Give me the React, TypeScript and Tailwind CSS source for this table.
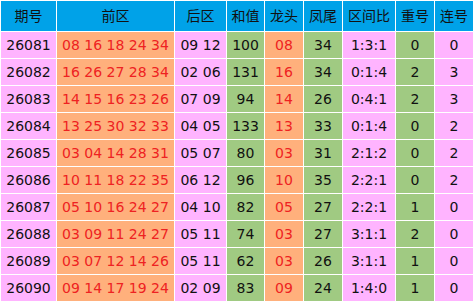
const headers = ['期号', '前区', '后区', '和值', '龙头', '凤尾', '区间比', '重号', '连号']

const rows = [
  ['26081', '08 16 18 24 34', '09 12', '100', '08', '34', '1:3:1', '0', '0'],
  ['26082', '16 26 27 28 34', '02 06', '131', '16', '34', '0:1:4', '2', '3'],
  ['26083', '14 15 16 23 26', '07 09', '94', '14', '26', '0:4:1', '2', '3'],
  ['26084', '13 25 30 32 33', '04 05', '133', '13', '33', '0:1:4', '0', '2'],
  ['26085', '03 04 14 28 31', '05 07', '80', '03', '31', '2:1:2', '0', '2'],
  ['26086', '10 11 18 22 35', '06 12', '96', '10', '35', '2:2:1', '0', '2'],
  ['26087', '05 10 16 24 27', '04 10', '82', '05', '27', '2:2:1', '1', '0'],
  ['26088', '03 09 11 24 27', '05 11', '74', '03', '27', '3:1:1', '2', '0'],
  ['26089', '03 07 12 14 26', '05 11', '62', '03', '26', '3:1:1', '1', '0'],
  ['26090', '09 14 17 19 24', '02 09', '83', '09', '24', '1:4:0', '1', '0'],
]

// cell colour per column
const cellClass = [
  'bg-[#ffb4ff] text-[#111]',
  'bg-[#ffb07c] text-[#ee2222]',
  'bg-[#ffb4ff] text-[#111]',
  'bg-[#a0ca82] text-[#111]',
  'bg-[#ffb07c] text-[#ee2222]',
  'bg-[#a0ca82] text-[#111]',
  'bg-[#ffb4ff] text-[#111]',
  'bg-[#a0ca82] text-[#111]',
  'bg-[#ffb4ff] text-[#111]',
]

export default function App() {
  return (
    <div
      className="w-[474px] h-[302px] bg-white p-px grid gap-px grid-cols-[55px_117px_51px_37px_38px_38px_52px_38px_38px] grid-rows-[30px_repeat(10,26px)] text-[14px] leading-none"
      style={{ fontFamily: '"DejaVu Sans", "Noto Sans CJK SC", sans-serif' }}
    >
      {headers.map(h => (
        <div key={h} className="bg-[#00a2e8] text-[#111] flex items-center justify-center">
          {h}
        </div>
      ))}
      {rows.map(r =>
        r.map((v, i) => (
          <div key={r[0] + i} className={`${cellClass[i]} flex items-center justify-center whitespace-nowrap`}>
            {v}
          </div>
        ))
      )}
    </div>
  )
}
